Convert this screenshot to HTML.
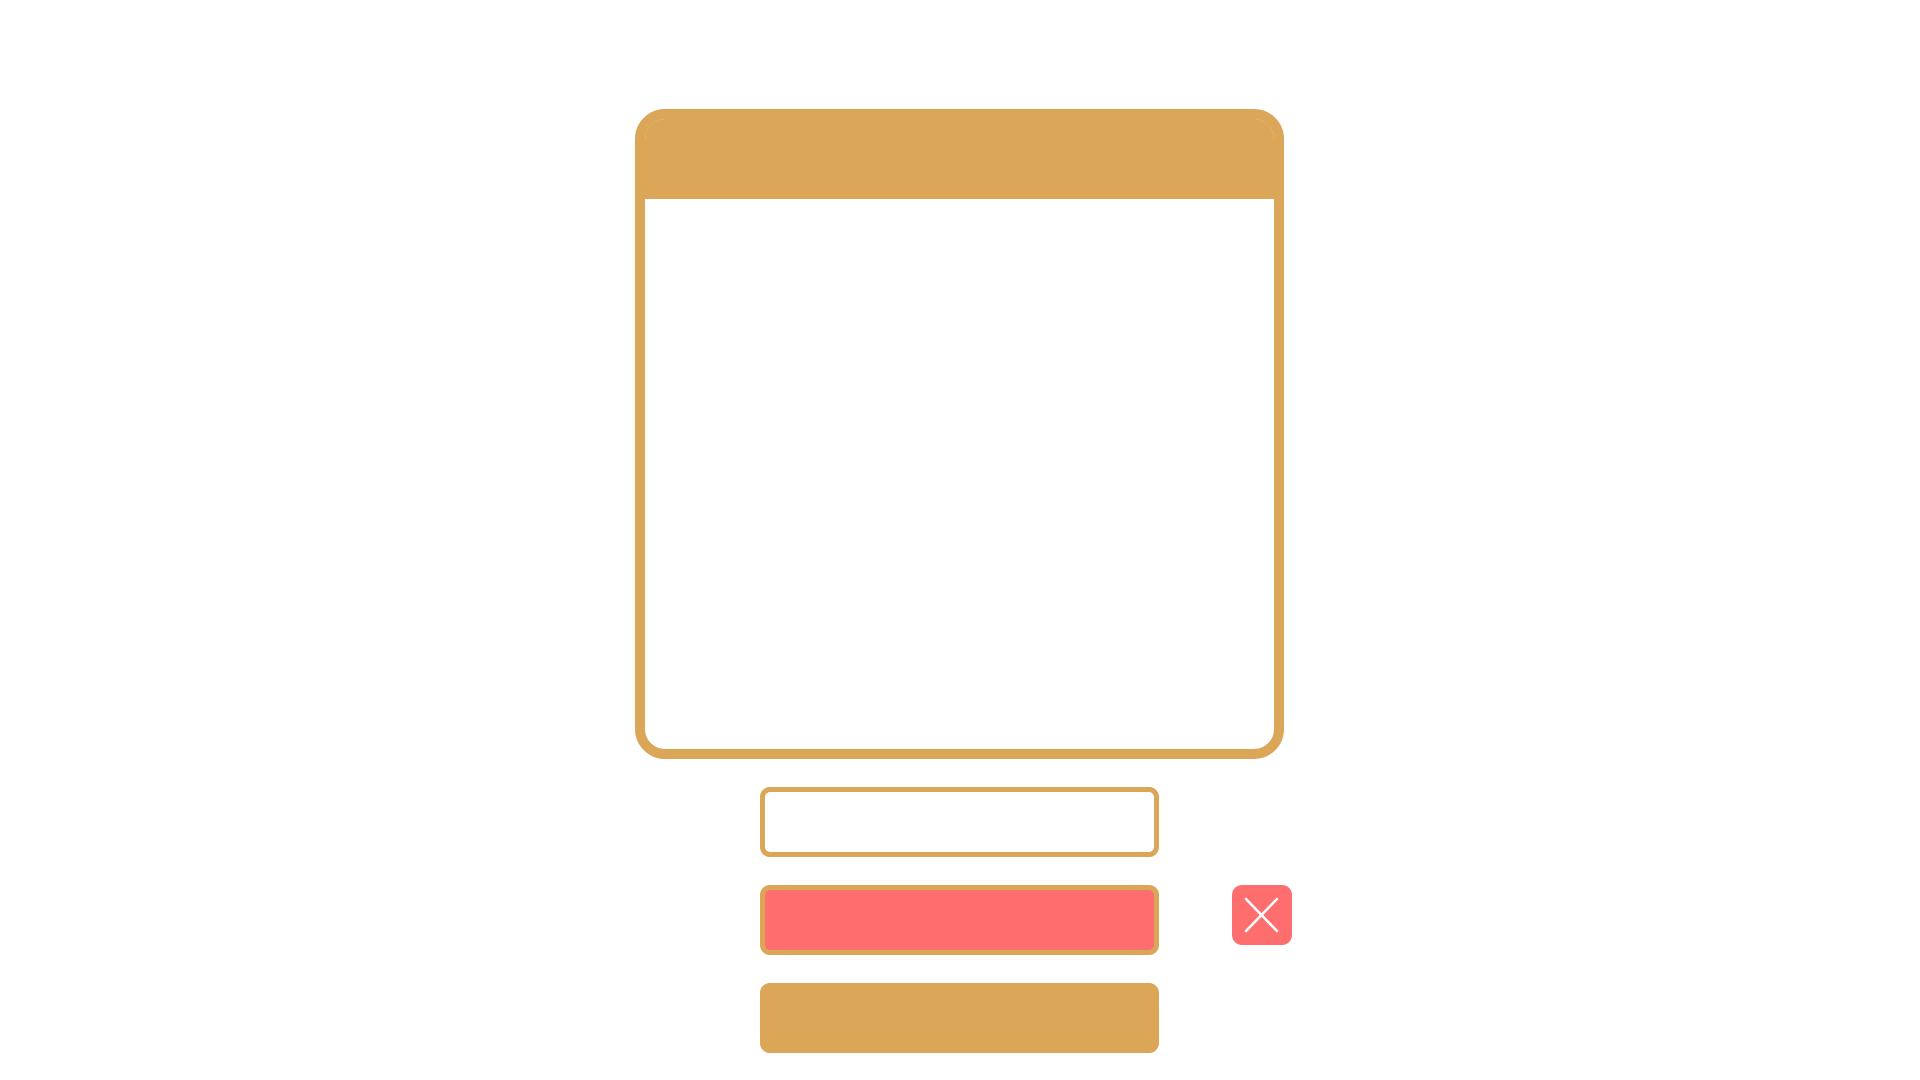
<!DOCTYPE html>
<html><head><meta charset="utf-8"><style>
html,body{margin:0;padding:0;background:#fff;width:1920px;height:1080px;overflow:hidden;position:relative}
.win{position:absolute;left:635px;top:109px;width:629px;height:630px;border:10px solid #DBA657;border-radius:30px;background:#fff;overflow:hidden}
.hdr{position:absolute;left:0;top:0;right:0;height:80px;background:#DBA657}
.inp{position:absolute;left:760px;width:389px;height:60px;border:5px solid #DBA657;border-radius:10px;box-sizing:content-box}
.x{position:absolute;left:1232px;top:885px;width:60px;height:60px;background:#FF6E6E;border-radius:10px}
</style></head><body>
<div class="win"><div class="hdr"></div></div>
<div class="inp" style="top:787px;background:#fff"></div>
<div class="inp" style="top:885px;background:#FF6E6E"></div>
<div class="inp" style="top:983px;background:#DBA657;border-color:#DBA657"></div>
<div class="x"><svg width="60" height="60" viewBox="0 0 60 60"><path d="M14 14 L45 46 M45 14 L14 46" stroke="#fff" stroke-width="2.5" stroke-linecap="round"/></svg></div>
</body></html>
